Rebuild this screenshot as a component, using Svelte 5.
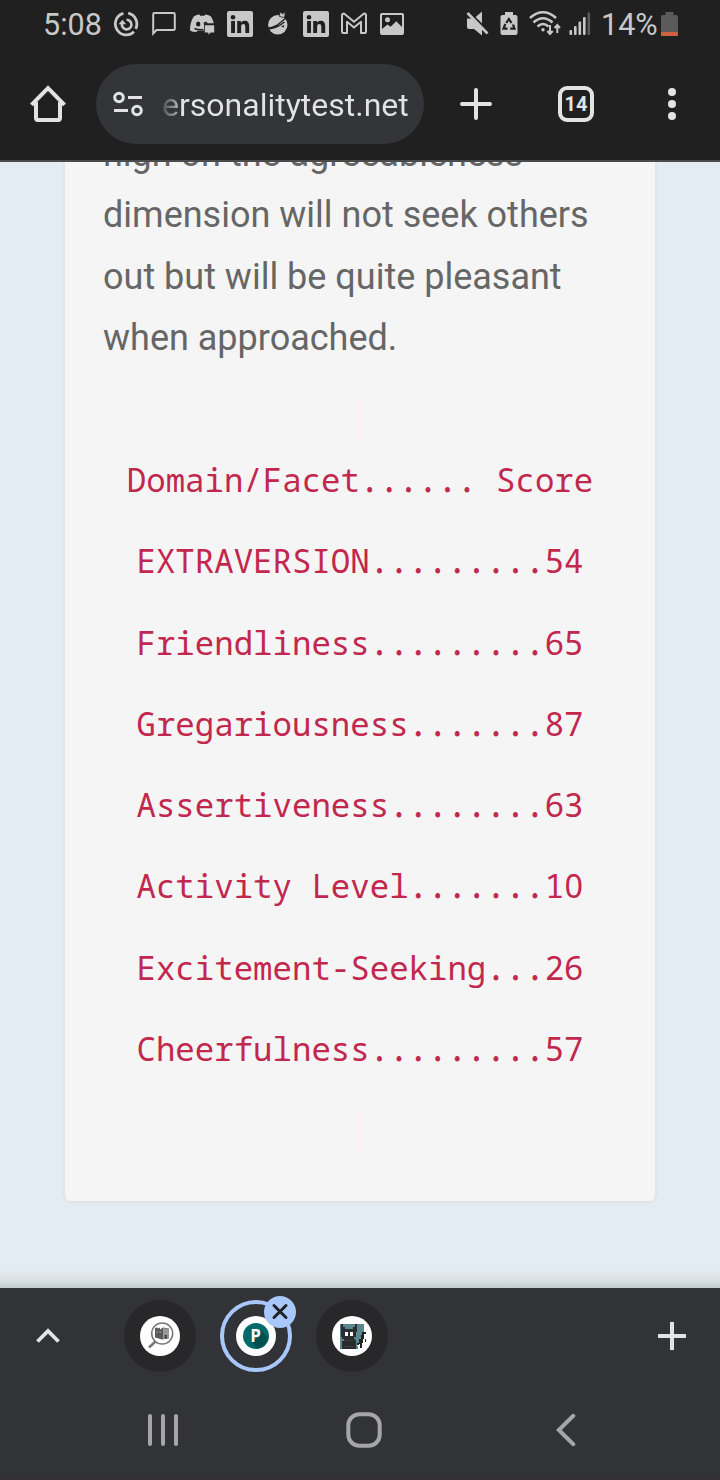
<script>
    let lines = [
        "high on the agreeableness",
        "dimension will not seek others",
        "out but will be quite pleasant",
        "when approached.",
    ];

    let scores = [
        { name: "Domain/Facet", dots: 6, value: " Score" },
        { name: "EXTRAVERSION", dots: 9, value: "54" },
        { name: "Friendliness", dots: 9, value: "65" },
        { name: "Gregariousness", dots: 7, value: "87" },
        { name: "Assertiveness", dots: 8, value: "63" },
        { name: "Activity Level", dots: 7, value: "10" },
        { name: "Excitement-Seeking", dots: 3, value: "26" },
        { name: "Cheerfulness", dots: 9, value: "57" },
    ];

    let tabCount = 14;
</script>

{#snippet linkedin()}
<svg class="ico" width="26" height="26" viewBox="0 0 26 26">
    <rect width="26" height="26" rx="2" fill="#c8c8c8" />
    <g fill="#202020">
        <circle cx="6" cy="6.3" r="2.3" />
        <rect x="4.1" y="10" width="3.9" height="12" />
        <path d="M10.2 10h3.7v1.7c.8-1.3 2-2 3.7-2 3.3 0 4.6 2 4.6 5.3v7h-3.9v-6.200c0-1.700-.5-2.800-2-2.800-1.600 0-2.200 1.200-2.200 2.800v6.200h-3.900z" />
    </g>
</svg>
{/snippet}

<div class="screen">
    <div class="status">
        <span class="clock">5:08</span>
        <div class="notices">
            <svg width="26" height="26" viewBox="0 0 26 26" fill="none" stroke="#c8c8c8">
                <path d="M10.400 2.300A11 11 0 1 0 21 20.800M15.200 2.200A11 11 0 0 1 22.700 17.800" stroke-width="2.800" />
                <path d="M9 12.500A4.800 4.800 0 1 0 13.500 8.800" stroke-width="2.600" />
                <path d="M5.500 13.300l4-4.500 3.600 4.500z" fill="#c8c8c8" stroke="none" />
            </svg>
            <svg width="26" height="26" viewBox="0 0 26 26" fill="none" stroke="#c8c8c8" stroke-width="2">
                <path d="M2.200 22.500V3.200q0-1.200 1.200-1.200h19.200q1.200 0 1.200 1.200v14.600q0 1.200-1.200 1.200H5.500z" />
            </svg>
            <svg width="26" height="26" viewBox="0 0 26 26" fill="#c8c8c8">
                <path d="M1 19.500C1 13 2.500 8.500 5 5.200q3-1.900 5.500-1.700l.7 1.300h4.200l.8-1.300q2.800 0 5.500 1.700c1.300 1.800 2.400 4 3 7H15v7.500H8.800L7.200 21Q3.500 21 1 19.500z" />
                <ellipse cx="9.200" cy="13" rx="2.200" ry="2.600" fill="#202020" />
                <path d="M15 12.800q2-2.500 3.200.200M5.500 17.500q3 1.700 9 1.200" stroke="#202020" stroke-width="1.500" fill="none" />
                <path d="M15.800 14.200h9.400v7.200h-3.500l-2.300 2.300v-2.300h-3.600z" />
            </svg>
            {@render linkedin()}
            <svg width="26" height="26" viewBox="0 0 26 26" fill="#c8c8c8">
                <circle cx="12.800" cy="13.800" r="9.700" />
                <path d="M14.500 5.500l.5-4.700 2.800 2 2.500-2-.7 5.800z" stroke="#202020" stroke-width=".8" />
                <path d="M2 17.200C10 17 14 13 21.500 6.500M3 18q8-.2 16.500-7" stroke="#202020" stroke-width="1.300" fill="none" />
                <path d="M16 15.500l3.200-1.500-.5 2.400z" fill="#202020" />
            </svg>
            {@render linkedin()}
            <svg width="26" height="26" viewBox="0 0 26 26" fill="none" stroke="#c8c8c8" stroke-width="2" stroke-linejoin="round">
                <path d="M1 20.800V4.500q0-2 2-2l10 8.200 10-8.200q2 0 2 2V20.800q0 1.200-1.200 1.200H20V10.800L13 16.600 6 10.800V22H2.200Q1 22 1 20.800z" />
            </svg>
            <svg width="26" height="26" viewBox="0 0 26 26">
                <rect x="2" y="3" width="22" height="20" rx="1" fill="none" stroke="#c8c8c8" stroke-width="2" />
                <circle cx="8.500" cy="8.800" r="2.500" fill="#c8c8c8" />
                <path d="M3 18l5.500-4.500 3.200 2.200 5.500-5.500L23 16v7H3z" fill="#c8c8c8" />
            </svg>
        </div>
        <div class="signals">
            <svg width="24" height="26" viewBox="0 0 24 26" fill="#c8c8c8">
                <path d="M2 7.500h7l8-7V24.500L9 18H4q-2 0-2-2z" />
                <path d="M1 -.5L24 22" stroke="#202020" stroke-width="4" />
                <path d="M2.500 2L22.500 22.500" stroke="#c8c8c8" stroke-width="2.600" />
            </svg>
            <svg width="18" height="26" viewBox="0 0 18 26">
                <path d="M5 1h8v3h2.500Q17.500 4 17.500 6v16q0 2-2 2h-13q-2 0-2-2V6q0-2 2-2H5z" fill="#c8c8c8" />
                <path d="M6.200 12l2.700-4 2.600 4M13 13.500l1.500 4.200h-4.200M7.500 17.700H3.500L5.300 13" stroke="#202020" stroke-width="2.200" fill="none" />
            </svg>
            <svg width="33" height="26" viewBox="0 0 33 26" fill="none" stroke="#c8c8c8" stroke-width="2.500">
                <path d="M1 7Q14-4.500 27 7M4.500 11.500Q14 3 23.500 11.500M8.500 15.500Q14 10.500 19.500 15.500" />
                <circle cx="14" cy="18.800" r="1.700" fill="#c8c8c8" stroke="none" />
                <path d="M21 14v8.500M18.300 20l2.700 3 2.700-3M28.300 22v-8M25.600 17l2.700-3 2.700 3" stroke-width="2" />
            </svg>
            <svg width="22" height="26" viewBox="0 0 22 26" fill="#c8c8c8">
                <rect x=".5" y="19" width="2.600" height="5" rx="1" />
                <rect x="5" y="15" width="2.600" height="9" rx="1" />
                <rect x="9.500" y="10.500" width="2.600" height="13.500" rx="1" />
                <rect x="14" y="6" width="2.600" height="18" rx="1" />
                <rect x="18.500" y="1.500" width="2.600" height="22.500" rx="1" fill="#5a5a5a" />
            </svg>
        </div>
        <span class="percent">14%</span>
        <svg class="battery" width="17" height="26" viewBox="0 0 17 26">
            <path d="M4.500 1h8v3H15q2 0 2 2v18q0 1-1 1H1q-1 0-1-1V6q0-2 2-2h2.500z" fill="#5b5b5b" />
            <path d="M0 21h17v3q0 1-1 1H1q-1 0-1-1z" fill="#cb6340" />
        </svg>
    </div>

    <div class="toolbar">
        <svg class="home" width="40" height="40" viewBox="0 0 40 40" fill="none" stroke="#e3e3e3" stroke-width="4">
            <path d="M3.500 20.800L20 4.200l16.500 16.600M8 18v16q0 2 2 2h20q2 0 2-2V18" />
        </svg>
        <div class="omnibox">
            <svg width="32" height="28" viewBox="0 0 32 28" fill="none" stroke="#e3e3e3" stroke-width="3">
                <circle cx="7" cy="7.500" r="4.300" />
                <path d="M16 7.500h14M2 20.500h14" />
                <circle cx="25" cy="20.500" r="4.300" />
            </svg>
            <span class="url">ersonalitytest.net</span>
        </div>
        <div class="action">
            <svg width="32" height="32" viewBox="0 0 32 32" stroke="#e3e3e3" stroke-width="4" stroke-linecap="round">
                <path d="M2 16h28M16 2v28" />
            </svg>
        </div>
        <div class="action"><div class="tabs">{tabCount}</div></div>
        <div class="action">
            <svg width="8" height="32" viewBox="0 0 8 32" fill="#e3e3e3">
                <circle cx="4" cy="4" r="4" />
                <circle cx="4" cy="16" r="4" />
                <circle cx="4" cy="28" r="4" />
            </svg>
        </div>
    </div>

    <div class="page">
        <div class="card">
            <p class="text">
                {#each lines as line}
                <span>{line}</span>
                {/each}
            </p>
            <div class="chip"></div>
            <div class="scores">
                {#each scores as score}
                <code>{score.name}<span class="dots">{".".repeat(score.dots)}</span>{#each score.value as ch}{#if ch == "0"}<span class="zero">0</span>{:else}{ch}{/if}{/each}</code>
                {/each}
            </div>
            <div class="chip last"></div>
        </div>
    </div>

    <div class="group">
        <svg class="up" width="24" height="16" viewBox="0 0 24 16" fill="none" stroke="#e3e3e3" stroke-width="3.800">
            <path d="M1.500 13.500L12 3l10.500 10.500" />
        </svg>
        <div class="tab">
            <div class="favicon">
                <svg width="30" height="30" viewBox="0 0 30 30">
                    <path d="M11 20L4 26.500" stroke="#777" stroke-width="2.500" />
                    <circle cx="17.200" cy="12.500" r="10.500" fill="#fff" stroke="#777" stroke-width="1.500" />
                    <path d="M10 7l2-.5 1 1 2-1v2l3-2 6 1v10l-7 1-7-2z" fill="#5a5a5a" />
                    <path d="M18 7l6 1v9l-6 1z" fill="#999" />
                    <path d="M19.500 14h2.500v3.500h-2.500z" fill="#444" />
                    <path d="M12 10v2M15 10v2" stroke="#999" />
                </svg>
            </div>
        </div>
        <div class="tab active">
            <div class="favicon">
                <svg width="26" height="26" viewBox="0 0 26 26">
                    <circle cx="13" cy="13" r="13" fill="#00696b" />
                    <path d="M17.500 7l7.300 7.300A13 13 0 0 1 14.500 25.900L9 19.500z" fill="#00504f" />
                    <text x="12.500" y="19.200" text-anchor="middle" fill="#fff" font-size="17" font-weight="700">P</text>
                </svg>
            </div>
            <div class="close">
                <svg width="18" height="18" viewBox="0 0 18 18" stroke="#202124" stroke-width="3" stroke-linecap="round">
                    <path d="M3 2.500l12 12M15 2.500l-12 12" />
                </svg>
            </div>
        </div>
        <div class="tab">
            <div class="favicon">
                <svg width="28" height="28" viewBox="0 0 28 28" shape-rendering="crispEdges">
                    <rect x="2" y="2" width="24" height="25" fill="#5b8790" />
                    <path d="M19 17h9v11h-9z" fill="#fff" />
                    <path d="M3 2h2v3h2v2h8V5h2V2h2v8h-1v5h-2v2h1v1h1v9H4v-8h2v-2H4v-2H3z" fill="#2b2c2e" />
                    <path d="M24 10h4v2h-2v5h-1v4h-1v5h-2v-4h-1v-5h2v-4h1zM27 17h1v3h-1zM19 21h2v2h-2z" fill="#222" />
                    <path d="M19 17h2v4h-2zM19 24h1v3h-1z" fill="#5b8790" />
                    <path d="M7 10h3v4H7zM12 10h3v4h-3z" fill="#fff" />
                    <path d="M6 18.500h10M6 24.500h10" stroke="#3f3c3c" fill="none" />
                </svg>
            </div>
        </div>
        <svg class="add" width="28" height="28" viewBox="0 0 28 28" stroke="#e3e3e3" stroke-width="4">
            <path d="M0 14h28M14 0v28" />
        </svg>
    </div>

    <div class="nav">
        <svg width="32" height="34" viewBox="0 0 32 34" stroke="#a6a6a7" stroke-width="4" stroke-linecap="round">
            <path d="M3 3v28M16 3v28M29 3v28" />
        </svg>
        <svg class="homekey" width="36" height="36" viewBox="0 0 36 36" fill="none" stroke="#a6a6a7" stroke-width="4">
            <rect x="2.300" y="2.300" width="31.400" height="31.400" rx="11" />
        </svg>
        <svg width="20" height="34" viewBox="0 0 20 34" fill="none" stroke="#a6a6a7" stroke-width="4" stroke-linecap="round">
            <path d="M17.300 2.800L2.800 17l14.500 14.200" />
        </svg>
    </div>
</div>

<style>
    :global(body) {
        margin: 0;
        background: #202020;
    }

    .screen {
        width: 720px;
        height: 1480px;
        overflow: hidden;
        display: flex;
        flex-direction: column;
        font-family: Roboto, "Noto Sans", sans-serif;
    }

    svg {
        display: block;
        flex: none;
    }

    .status {
        flex: none;
        height: 48px;
        display: flex;
        align-items: center;
        box-sizing: border-box;
        padding-left: 43px;
        background: #202020;
        color: #c8c8c8;
    }

    .clock {
        width: 70px;
        font-size: 30.500px;
        line-height: 48px;
        padding-top: 1px;
        white-space: nowrap;
    }

    .notices {
        display: flex;
        gap: 12px;
    }

    .signals {
        display: flex;
        gap: 11px;
        margin-left: 60px;
    }

    .signals svg:nth-child(4) {
        margin-left: -4px;
    }

    .percent {
        margin-left: 10px;
        width: 60px;
        font-size: 30.500px;
        line-height: 48px;
        padding-top: 1px;
        white-space: nowrap;
    }

    .toolbar {
        flex: none;
        height: 114px;
        box-sizing: border-box;
        padding-left: 28px;
        display: flex;
        align-items: center;
        background: #202020;
        border-bottom: 2px solid #4a4b4d;
    }

    .omnibox {
        width: 328px;
        height: 80px;
        margin-left: 28px;
        box-sizing: border-box;
        padding-left: 16px;
        border-radius: 40px;
        background: #343539;
        display: flex;
        align-items: center;
    }

    .url {
        margin-left: 18px;
        padding-top: 2px;
        font-size: 32px;
        line-height: 48px;
        white-space: nowrap;
        background: linear-gradient(90deg, #4e4f53 0, #a0a0a2 14px, #e3e3e3 18px);
        background-clip: text;
        color: transparent;
    }

    .action {
        width: 96px;
        display: flex;
        justify-content: center;
    }

    .action:nth-child(3) {
        margin-left: 4px;
    }

    .action:nth-child(4) {
        margin-left: 4px;
    }

    .tabs {
        width: 36px;
        height: 36px;
        box-sizing: border-box;
        border: 4px solid #e3e3e3;
        border-radius: 9px;
        color: #e3e3e3;
        font-size: 20px;
        font-weight: 700;
        line-height: 29px;
        text-align: center;
    }

    .page {
        flex: none;
        height: 1126px;
        overflow: hidden;
        background: linear-gradient(#e4ebf300 1108px, #d9e1e6 1118px, #c2cccf), #e4ecf3;
    }

    .card {
        width: 590px;
        height: 1077px;
        margin: -40px auto 0;
        border: 2px solid #e2e4e5;
        border-radius: 8px;
        background: #f5f5f5;
        overflow: hidden;
    }

    .text {
        margin: 0 0 0 38px;
        color: #666;
        font-size: 36px;
        line-height: 61.400px;
    }

    .text span {
        display: block;
        white-space: nowrap;
    }

    .chip {
        width: 8px;
        height: 40px;
        margin: 30px auto -0.600px;
        border-radius: 4px;
        background: #f9f2f4;
    }

    .chip.last {
        margin-top: 22px;
    }

    .scores {
        display: flex;
        flex-direction: column;
        align-items: center;
    }

    code {
        font-family: "Droid Sans Mono", "Noto Sans Mono", "DejaVu Sans Mono", monospace;
        font-size: 32.400px;
        height: 81.250px;
        line-height: 81.250px;
        color: #c2274d;
        white-space: pre;
    }

    .dots {
        -webkit-text-stroke: 0.8px #c2274d;
    }

    /* the mono face has a slashed zero */
    .zero {
        display: inline-block;
        width: 0.6em;
        font-family: "Noto Sans", sans-serif;
        line-height: 1;
        text-align: center;
    }

    .group {
        flex: none;
        height: 96px;
        display: flex;
        align-items: center;
        background: #323337;
    }

    .up {
        margin: 0 76px 0 36px;
    }

    .tab {
        position: relative;
        width: 72px;
        height: 72px;
        margin-left: 24px;
        border-radius: 50%;
        background: #28282a;
        display: flex;
        align-items: center;
        justify-content: center;
    }

    .up + .tab {
        margin-left: -12px;
    }

    .active {
        box-sizing: border-box;
        border: 4px solid #a8c7fa;
        background: none;
    }

    .favicon {
        width: 40px;
        height: 40px;
        border-radius: 50%;
        background: #fff;
        display: flex;
        align-items: center;
        justify-content: center;
    }

    .favicon text {
        font-family: "Open Sans", "Noto Sans", sans-serif;
    }

    .close {
        position: absolute;
        top: -8px;
        right: -8px;
        width: 32px;
        height: 32px;
        border-radius: 50%;
        background: #a8c7fa;
        display: flex;
        align-items: center;
        justify-content: center;
    }

    .add {
        margin-left: auto;
        margin-right: 34px;
    }

    .nav {
        flex: none;
        height: 96px;
        box-sizing: border-box;
        padding: 0 144px 4px 147px;
        display: flex;
        align-items: center;
        background: #323337;
        border-bottom: 1px solid #382a32;
    }

    .homekey {
        margin: 0 auto 0 167px;
    }
</style>
